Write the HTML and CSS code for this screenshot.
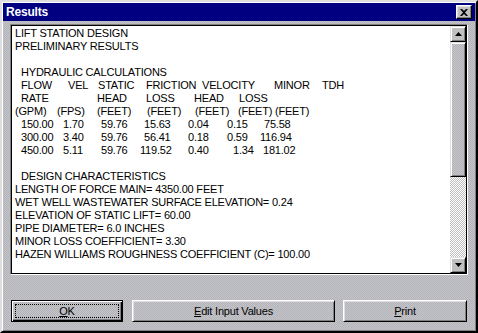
FILE: index.html
```html
<!DOCTYPE html>
<html lang="en">
<head>
  <meta charset="UTF-8">
  <title>Results</title>
  <link rel="stylesheet" href="styles.css">
</head>
<body>
  <div class="window">
    <div class="titlebar">
      <span class="title">Results</span>
      <button class="close-btn" aria-label="Close">
        <svg width="8" height="7" viewBox="0 0 8 7"><path d="M0 0h2l2 2 2-2h2L5 3.5 8 7H6L4 5 2 7H0l3-3.5z" fill="#000"/></svg>
      </button>
    </div>

    <div class="textbox">
      <div class="report">
        <div class="line">LIFT STATION DESIGN</div>
        <div class="line">PRELIMINARY RESULTS</div>
        <div class="line"></div>
        <div class="line indent">HYDRAULIC CALCULATIONS</div>
        <div class="line cols hdr1">
          <span>FLOW</span><span>VEL</span><span>STATIC</span><span>FRICTION</span><span>VELOCITY</span><span>MINOR</span><span>TDH</span>
        </div>
        <div class="line cols hdr2">
          <span>RATE</span><span>HEAD</span><span>LOSS</span><span>HEAD</span><span>LOSS</span>
        </div>
        <div class="line cols hdr3">
          <span>(GPM)</span><span>(FPS)</span><span>(FEET)</span><span>(FEET)</span><span>(FEET)</span><span>(FEET)</span><span>(FEET)</span>
        </div>
        <div class="line cols row1">
          <span>150.00</span><span>1.70</span><span>59.76</span><span>15.63</span><span>0.04</span><span>0.15</span><span>75.58</span>
        </div>
        <div class="line cols row2">
          <span>300.00</span><span>3.40</span><span>59.76</span><span>56.41</span><span>0.18</span><span>0.59</span><span>116.94</span>
        </div>
        <div class="line cols row3">
          <span>450.00</span><span>5.11</span><span>59.76</span><span>119.52</span><span>0.40</span><span>1.34</span><span>181.02</span>
        </div>
        <div class="line"></div>
        <div class="line indent">DESIGN CHARACTERISTICS</div>
        <div class="line">LENGTH OF FORCE MAIN= 4350.00 FEET</div>
        <div class="line">WET WELL WASTEWATER SURFACE ELEVATION= 0.24</div>
        <div class="line">ELEVATION OF STATIC LIFT= 60.00</div>
        <div class="line">PIPE DIAMETER= 6.0 INCHES</div>
        <div class="line">MINOR LOSS COEFFICIENT= 3.30</div>
        <div class="line">HAZEN WILLIAMS ROUGHNESS COEFFICIENT (C)= 100.00</div>
      </div>

      <div class="scrollbar">
        <div class="sb-btn">
          <svg width="7" height="4" viewBox="0 0 7 4"><path d="M3.5 0L7 4H0z" fill="#000"/></svg>
        </div>
        <div class="sb-thumb"></div>
        <div class="sb-track"></div>
        <div class="sb-btn">
          <svg width="7" height="4" viewBox="0 0 7 4"><path d="M0 0h7L3.5 4z" fill="#000"/></svg>
        </div>
      </div>
    </div>

    <div class="actions">
      <button class="btn btn-ok"><span class="focus"><u>O</u>K</span></button>
      <button class="btn btn-edit"><u>E</u>dit Input Values</button>
      <button class="btn btn-print"><u>P</u>rint</button>
    </div>
  </div>
</body>
</html>
```

FILE: styles.css
```css
body {
  margin: 0;
  padding: 0;
  font-family: 'Liberation Sans', Arial, sans-serif;
  font-size: 11px;
  background-color: #c0c0c0;
}

.window {
  width: 478px;
  height: 333px;
  box-sizing: border-box;
  display: flex;
  flex-direction: column;
  padding: 1px;
  border: 2px solid;
  border-color: #dfdfdf #000 #000 #dfdfdf;
  box-shadow: inset 1px 1px 0 #fff, inset -1px -1px 0 #808080;
  background-color: #bcbcc0;
  background-image: repeating-conic-gradient(#c6c6c0 0 25%, #b2b2c2 0 50%);
  background-size: 2px 2px;
}

.titlebar {
  height: 18px;
  background-color: #000080;
  display: flex;
  align-items: center;
  justify-content: space-between;
  padding: 0 3px 0 3px;
}

.title {
  color: #fff;
  font-weight: bold;
  font-size: 12px;
  letter-spacing: -0.2px;
}

.close-btn {
  width: 16px;
  height: 14px;
  padding: 0;
  display: flex;
  align-items: center;
  justify-content: center;
  background-color: #c0c0c0;
  border: 1px solid;
  border-color: #fff #000 #000 #fff;
  box-shadow: inset -1px -1px 0 #808080, inset 1px 1px 0 #dfdfdf;
}

.textbox {
  margin: 3px 7px 0 7px;
  height: 251px;
  box-sizing: border-box;
  display: flex;
  border: 1px solid;
  border-color: #808080 #fff #fff #808080;
  box-shadow: inset 1px 1px 0 #000, inset -1px -1px 0 #000;
  padding: 1px;
}

.report {
  flex: 1;
  background-color: #fff;
  color: #000;
  padding: 1px 0 0 3px;
  letter-spacing: -0.2px;
  overflow: hidden;
}

.line {
  height: 13px;
  line-height: 13px;
  white-space: nowrap;
}

.indent {
  padding-left: 6px;
}

.cols {
  display: grid;
  padding-left: 6px;
}

.cols span {
  white-space: nowrap;
}

.hdr1 { grid-template-columns: 47px 30px 48px 56px 72px 48px auto; }
.hdr2 { grid-template-columns: 76px 49px 48px 45px auto; }
.hdr3 { padding-left: 0; grid-template-columns: 42px 40px 50px 48px 43px 37px auto; }
.row1 { grid-template-columns: 42px 38px 43px 44px 39px 37px auto; }
.row2 { grid-template-columns: 42px 38px 43px 44px 39px 33px auto; }
.row3 { grid-template-columns: 42px 38px 39px 48px 45px 30px auto; }

.scrollbar {
  width: 16px;
  display: flex;
  flex-direction: column;
}

.sb-btn,
.sb-thumb {
  box-sizing: border-box;
  background-color: #c0c0c0;
  border: 1px solid;
  border-color: #dfdfdf #000 #000 #dfdfdf;
  box-shadow: inset 1px 1px 0 #fff, inset -1px -1px 0 #808080;
}

.sb-btn {
  height: 16px;
  display: flex;
  align-items: center;
  justify-content: center;
}

.sb-thumb {
  height: 135px;
  background-color: #bcbcc0;
  background-image: repeating-conic-gradient(#c6c6c0 0 25%, #b2b2c2 0 50%);
  background-size: 2px 2px;
}

.sb-track {
  flex: 1;
  background-image: repeating-conic-gradient(#fff 0 25%, #c0c0c0 0 50%);
  background-size: 2px 2px;
}

.actions {
  display: flex;
  margin: 25px 0 0 8px;
  gap: 9px;
}

.btn {
  height: 22px;
  box-sizing: border-box;
  padding: 0;
  font-family: 'Liberation Sans', Arial, sans-serif;
  font-size: 11px;
  letter-spacing: -0.2px;
  color: #000;
  background: transparent;
  border: 1px solid;
  border-color: #fff #000 #000 #fff;
  box-shadow: inset 1px 1px 0 #dfdfdf, inset -1px -1px 0 #808080;
}

.btn u {
  text-decoration-thickness: 1px;
}

.btn-ok {
  width: 112px;
  border: 1px solid #000;
  box-shadow: inset 1px 1px 0 #fff, inset -1px -1px 0 #000, inset -2px -2px 0 #808080;
  padding: 3px;
  display: flex;
}

.focus {
  flex: 1;
  display: flex;
  align-items: center;
  justify-content: center;
  border: 1px dotted #000;
}

.btn-edit {
  width: 203px;
}

.btn-print {
  width: 124px;
  margin-left: -1px;
}
```
